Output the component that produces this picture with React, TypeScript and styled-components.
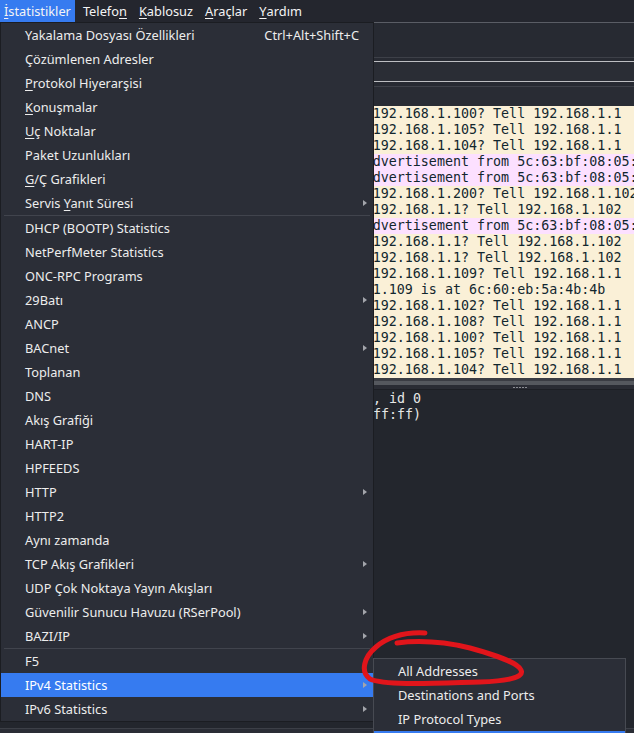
import React from "react";
import styled, { createGlobalStyle } from "styled-components";

const UI = `"Noto Sans", "Open Sans", sans-serif`;
const MONO = `"DejaVu Sans Mono", "Liberation Mono", monospace`;

const GlobalStyle = createGlobalStyle`
  html, body { margin: 0; padding: 0; background: #23262d; overflow: hidden; }
  * { box-sizing: border-box; }
`;

const Window = styled.div`
  position: relative;
  width: 634px;
  height: 733px;
  overflow: hidden;
  display: flex;
  flex-direction: column;
  background: #23262d;
  font-family: ${UI};
`;

const MenuBar = styled.div`
  flex: none;
  height: 22px;
  display: flex;
  align-items: stretch;
  background: #24262e;
`;

const MenuTitle = styled.div<{ $active?: boolean }>`
  display: flex;
  align-items: center;
  padding: 0 4px 0 4px;
  margin-right: 4px;
  color: #f4f4f4;
  font-size: 12.8px;
  white-space: nowrap;
  background: ${(p) => (p.$active ? "#367bf0" : "transparent")};
`;

const Mn = styled.span`
  text-decoration: underline;
  text-underline-offset: 2px;
  text-decoration-thickness: 1px;
`;

const Toolbar = styled.div`
  flex: none;
  height: 36px;
  background: #272a32;
  border-top: 1px solid #5a5d65;
  border-bottom: 1px solid #3d4048;
`;

const FilterBar = styled.div`
  flex: none;
  height: 29px;
  padding: 3px 0 4px 4px;
  background: #272a32;
  border-bottom: 1px solid #3d4048;
  display: flex;
`;

const FilterInput = styled.div`
  flex: 1;
  margin-right: -20px;
  border-top: 1px solid #bdbec2;
  border-bottom: 1px solid #bdbec2;
  border-left: 1px solid #bdbec2;
  background: #2a2d35;
`;

const PacketHeader = styled.div`
  flex: none;
  height: 19px;
  background: #292c34;
`;

const PacketList = styled.div`
  flex: none;
  display: flex;
  flex-direction: column;
`;

const Row = styled.div<{ $bg: string }>`
  height: 16px;
  display: grid;
  grid-template-columns: 38px 80px 64px 64px 38px 24px 1fr;
  align-items: center;
  background: ${(p) => p.$bg};
  color: #12272e;
  font-family: ${MONO};
  font-size: 13.33px;
  line-height: 16px;
  white-space: nowrap;
  overflow: hidden;
`;

const Cell = styled.span`
  overflow: hidden;
  padding-left: 2px;
`;

const InfoCell = styled.span`
  overflow: visible;
  padding-left: 0.5px;
`;

const HScroll = styled.div`
  flex: none;
  height: 7px;
  border-top: 3px solid #3a3c43;
  background: #55585e;
`;

const Splitter = styled.div`
  flex: none;
  height: 5px;
  background: #2a2c34;
  border-bottom: 1px solid #1d1f25;
  display: flex;
  justify-content: center;
  align-items: center;
  padding-left: 406px;
`;

const Grip = styled.div`
  width: 15px;
  height: 1px;
  background: repeating-linear-gradient(90deg, #8b8d93 0 2px, transparent 2px 3px);
`;

const Details = styled.div`
  flex: 1;
  background: #23262d;
  color: #e6e6e6;
  font-family: ${MONO};
  font-size: 13.33px;
  line-height: 16px;
  padding-top: 1px;
`;

const DetailLine = styled.div`
  display: grid;
  grid-template-columns: 373px auto;
  white-space: nowrap;
`;

const DetailPrefix = styled.span`
  overflow: hidden;
  padding-left: 18px;
`;

const StatusBar = styled.div`
  flex: none;
  height: 5px;
  border-top: 1px solid #3c3f47;
  background: #2a2d35;
`;

/* ---------- dropdown menu ---------- */

const Menu = styled.div`
  position: absolute;
  left: 0;
  top: 22px;
  width: 374px;
  background: #2b2e37;
  border: 1px solid #1b1d22;
  display: flex;
  flex-direction: column;
  font-family: ${UI};
  font-size: 12.8px;
  color: #ededed;
`;

const Item = styled.div<{ $hl?: boolean }>`
  height: 24px;
  display: grid;
  grid-template-columns: 1fr auto 6px;
  align-items: center;
  padding: 0 4px 0 24px;
  white-space: nowrap;
  background: ${(p) => (p.$hl ? "#367bf0" : "transparent")};
  color: ${(p) => (p.$hl ? "#ffffff" : "#ededed")};
`;

const Shortcut = styled.span`
  margin-right: 4px;
`;

const Arrow = styled.span`
  width: 0;
  height: 0;
  border-left: 4px solid #a3a5ab;
  border-top: 3px solid transparent;
  border-bottom: 3px solid transparent;
`;

const Separator = styled.div`
  height: 1px;
  margin: 0 3px;
  background: #41444d;
`;

const SubMenu = styled.div`
  position: absolute;
  left: 373px;
  top: 658px;
  width: 253px;
  background: #2b2e37;
  border: 1px solid #474a52;
  display: flex;
  flex-direction: column;
  font-family: ${UI};
  font-size: 12.8px;
  color: #ededed;
`;

const Annotation = styled.svg`
  position: absolute;
  left: 0;
  top: 0;
  pointer-events: none;
`;

type MenuEntry =
  | { sep: true }
  | { label: React.ReactNode; sub?: boolean; shortcut?: string; hl?: boolean; sep?: false };

const menu: MenuEntry[] = [
  { label: "Yakalama Dosyası Özellikleri", shortcut: "Ctrl+Alt+Shift+C" },
  { label: "Çözümlenen Adresler" },
  { label: <><Mn>P</Mn>rotokol Hiyerarşisi</> },
  { label: <><Mn>K</Mn>onuşmalar</> },
  { label: <><Mn>U</Mn>ç Noktalar</> },
  { label: "Paket Uzunlukları" },
  { label: <><Mn>G</Mn>/Ç Grafikleri</> },
  { label: <>Servis <Mn>Y</Mn>anıt Süresi</>, sub: true },
  { sep: true },
  { label: "DHCP (BOOTP) Statistics" },
  { label: "NetPerfMeter Statistics" },
  { label: "ONC-RPC Programs" },
  { label: "29Batı", sub: true },
  { label: "ANCP" },
  { label: "BACnet", sub: true },
  { label: "Toplanan" },
  { label: "DNS" },
  { label: "Akış Grafiği" },
  { label: "HART-IP" },
  { label: "HPFEEDS" },
  { label: "HTTP", sub: true },
  { label: "HTTP2" },
  { label: "Aynı zamanda" },
  { label: "TCP Akış Grafikleri", sub: true },
  { label: "UDP Çok Noktaya Yayın Akışları" },
  { label: "Güvenilir Sunucu Havuzu (RSerPool)", sub: true },
  { label: "BAZI/IP", sub: true },
  { sep: true },
  { label: "F5" },
  { label: "IPv4 Statistics", sub: true, hl: true },
  { label: "IPv6 Statistics", sub: true },
];

const subMenu = [
  { label: "All Addresses" },
  { label: "Destinations and Ports" },
  { label: "IP Protocol Types" },
  { label: "Source and Destination Addresses", hl: true },
];

const ARP = "#faf0d7";
const ICMP6 = "#fce0ff";

const packets: { info: string; bg: string; proto: string }[] = [
  { info: "Who has 192.168.1.100? Tell 192.168.1.1", bg: ARP, proto: "ARP" },
  { info: "Who has 192.168.1.105? Tell 192.168.1.1", bg: ARP, proto: "ARP" },
  { info: "Who has 192.168.1.104? Tell 192.168.1.1", bg: ARP, proto: "ARP" },
  { info: "Router Advertisement from 5c:63:bf:08:05:6e", bg: ICMP6, proto: "ICMPv6" },
  { info: "Router Advertisement from 5c:63:bf:08:05:6e", bg: ICMP6, proto: "ICMPv6" },
  { info: "Who has 192.168.1.200? Tell 192.168.1.102", bg: ARP, proto: "ARP" },
  { info: "Who has 192.168.1.1? Tell 192.168.1.102", bg: ARP, proto: "ARP" },
  { info: "Router Advertisement from 5c:63:bf:08:05:6e", bg: ICMP6, proto: "ICMPv6" },
  { info: "Who has 192.168.1.1? Tell 192.168.1.102", bg: ARP, proto: "ARP" },
  { info: "Who has 192.168.1.1? Tell 192.168.1.102", bg: ARP, proto: "ARP" },
  { info: "Who has 192.168.1.109? Tell 192.168.1.1", bg: ARP, proto: "ARP" },
  { info: "192.168.1.109 is at 6c:60:eb:5a:4b:4b", bg: ARP, proto: "ARP" },
  { info: "Who has 192.168.1.102? Tell 192.168.1.1", bg: ARP, proto: "ARP" },
  { info: "Who has 192.168.1.108? Tell 192.168.1.1", bg: ARP, proto: "ARP" },
  { info: "Who has 192.168.1.100? Tell 192.168.1.1", bg: ARP, proto: "ARP" },
  { info: "Who has 192.168.1.105? Tell 192.168.1.1", bg: ARP, proto: "ARP" },
  { info: "Who has 192.168.1.104? Tell 192.168.1.1", bg: ARP, proto: "ARP" },
];

const details = [
  { prefix: "Frame 1: 42 bytes on wire (336 bits), 42 bytes captured (336 bits) on interface eth0", tail: ", id 0" },
  { prefix: "Ethernet II, Src: 5c:63:bf:08:05:6e, Dst: Broadcast (ff:ff:ff:", tail: "ff:ff)" },
];

export default function App() {
  return (
    <Window>
      <GlobalStyle />
      <MenuBar>
        <MenuTitle $active>
          <Mn>İ</Mn>statistikler
        </MenuTitle>
        <MenuTitle>
          Telefo<Mn>n</Mn>
        </MenuTitle>
        <MenuTitle>
          <Mn>K</Mn>ablosuz
        </MenuTitle>
        <MenuTitle>
          <Mn>A</Mn>raçlar
        </MenuTitle>
        <MenuTitle>
          <Mn>Y</Mn>ardım
        </MenuTitle>
      </MenuBar>
      <Toolbar />
      <FilterBar>
        <FilterInput />
      </FilterBar>
      <PacketHeader />
      <PacketList>
        {packets.map((p, i) => (
          <Row key={i} $bg={p.bg}>
            <Cell>{i + 1}</Cell>
            <Cell>{(i * 0.512).toFixed(6)}</Cell>
            <Cell>src</Cell>
            <Cell>dst</Cell>
            <Cell>{p.proto}</Cell>
            <Cell>42</Cell>
            <InfoCell>{p.info}</InfoCell>
          </Row>
        ))}
      </PacketList>
      <HScroll />
      <Splitter>
        <Grip />
      </Splitter>
      <Details>
        {details.map((d, i) => (
          <DetailLine key={i}>
            <DetailPrefix>{d.prefix}</DetailPrefix>
            <span>{d.tail}</span>
          </DetailLine>
        ))}
      </Details>
      <StatusBar />

      <Menu>
        {menu.map((m, i) =>
          m.sep ? (
            <Separator key={i} />
          ) : (
            <Item key={i} $hl={m.hl}>
              <span>{m.label}</span>
              {m.shortcut ? <Shortcut>{m.shortcut}</Shortcut> : <span />}
              {m.sub ? <Arrow /> : <span />}
            </Item>
          )
        )}
      </Menu>

      <SubMenu>
        {subMenu.map((s, i) => (
          <Item key={i} $hl={s.hl}>
            <span>{s.label}</span>
            <span />
            <span />
          </Item>
        ))}
      </SubMenu>

      <Annotation width="634" height="733" viewBox="0 0 634 733">
        <path
          d="M425,633 C405,632 388,637 376,647 C364,657 360,672 370,679 C385,686 440,683 480,682 C505,681 525,678 521,670 C517,662 495,655 470,648 C445,642 420,640 397,643"
          fill="none"
          stroke="#e1151b"
          strokeWidth="5"
          strokeLinecap="round"
          strokeLinejoin="round"
        />
      </Annotation>
    </Window>
  );
}
